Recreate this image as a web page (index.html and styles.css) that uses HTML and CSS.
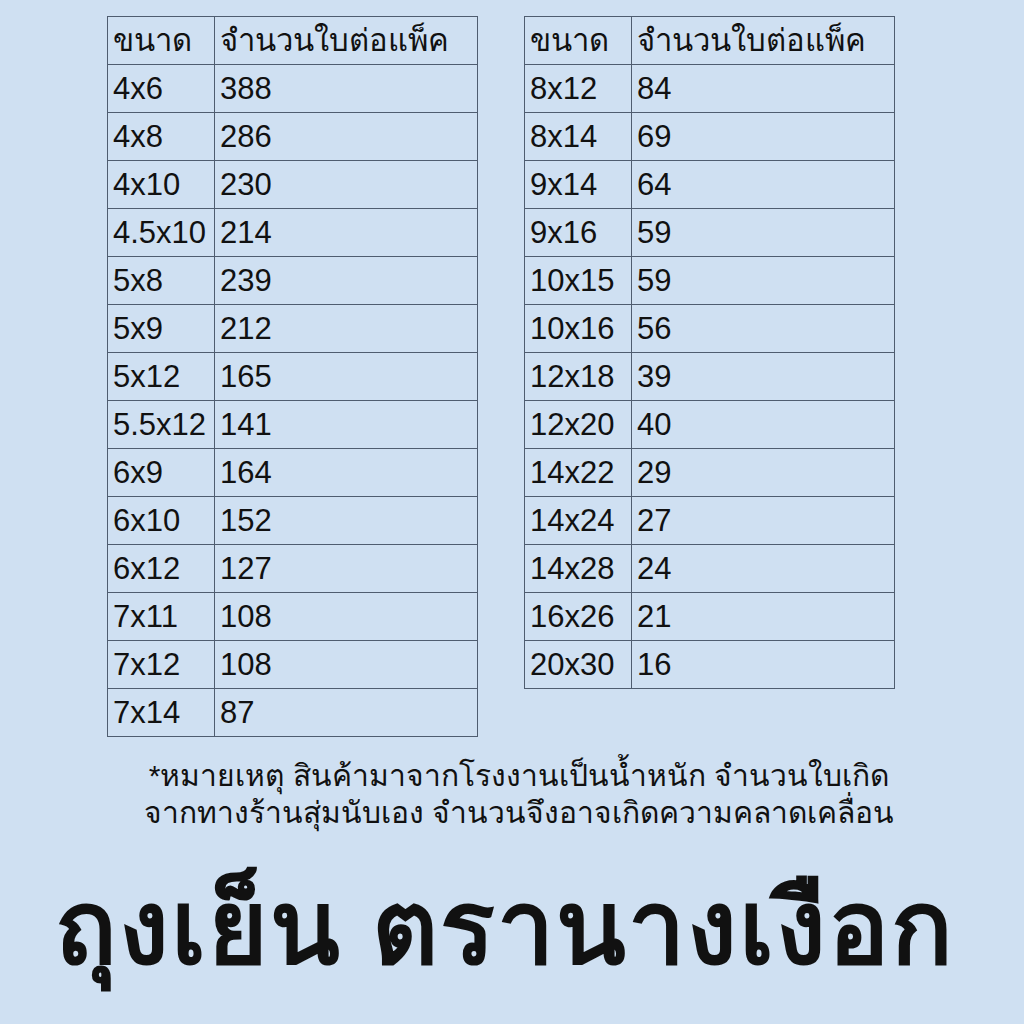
FILE: index.html
```html
<!DOCTYPE html>
<html lang="th">
<head>
<meta charset="utf-8">
<link rel="stylesheet" href="styles.css">
</head>
<body>
<div class="page">
  <div class="tables">
    <table class="grid">
      <tr><td class="c1">ขนาด</td><td class="c2">จำนวนใบต่อแพ็ค</td></tr>
      <tr><td>4x6</td><td>388</td></tr>
      <tr><td>4x8</td><td>286</td></tr>
      <tr><td>4x10</td><td>230</td></tr>
      <tr><td>4.5x10</td><td>214</td></tr>
      <tr><td>5x8</td><td>239</td></tr>
      <tr><td>5x9</td><td>212</td></tr>
      <tr><td>5x12</td><td>165</td></tr>
      <tr><td>5.5x12</td><td>141</td></tr>
      <tr><td>6x9</td><td>164</td></tr>
      <tr><td>6x10</td><td>152</td></tr>
      <tr><td>6x12</td><td>127</td></tr>
      <tr><td>7x11</td><td>108</td></tr>
      <tr><td>7x12</td><td>108</td></tr>
      <tr><td>7x14</td><td>87</td></tr>
    </table>
    <table class="grid">
      <tr><td class="c1">ขนาด</td><td class="c2">จำนวนใบต่อแพ็ค</td></tr>
      <tr><td>8x12</td><td>84</td></tr>
      <tr><td>8x14</td><td>69</td></tr>
      <tr><td>9x14</td><td>64</td></tr>
      <tr><td>9x16</td><td>59</td></tr>
      <tr><td>10x15</td><td>59</td></tr>
      <tr><td>10x16</td><td>56</td></tr>
      <tr><td>12x18</td><td>39</td></tr>
      <tr><td>12x20</td><td>40</td></tr>
      <tr><td>14x22</td><td>29</td></tr>
      <tr><td>14x24</td><td>27</td></tr>
      <tr><td>14x28</td><td>24</td></tr>
      <tr><td>16x26</td><td>21</td></tr>
      <tr><td>20x30</td><td>16</td></tr>
    </table>
  </div>
  <p class="note">*หมายเหตุ สินค้ามาจากโรงงานเป็นน้ำหนัก จำนวนใบเกิด<br>จากทางร้านสุ่มนับเอง จำนวนจึงอาจเกิดความคลาดเคลื่อน</p>
  <h1 class="title">ถุงเย็น ตรานางเงือก</h1>
</div>
</body>
</html>
```

FILE: styles.css
```css
html, body {
  margin: 0;
  padding: 0;
}
body {
  background: #cfe0f2;
  width: 1024px;
  height: 1024px;
  overflow: hidden;
  font-family: "Liberation Sans", Arial, sans-serif;
  color: #111;
}
.page {
  display: flex;
  flex-direction: column;
  align-items: stretch;
}
.tables {
  display: flex;
  align-items: flex-start;
  padding: 16px 0 0 107px;
  gap: 46px;
}
.grid {
  border-collapse: collapse;
  width: 371px;
  table-layout: fixed;
}
.grid td {
  border: 1px solid #4f5d70;
  height: 47px;
  padding: 0 0 0 5px;
  font-size: 31px;
  line-height: 47px;
  white-space: nowrap;
  overflow: visible;
  box-sizing: border-box;
}
.grid tr:first-child td { height: 48px; }
.grid td.c1 { width: 107px; }
.note {
  margin: 20px 0 0 0;
  text-align: center;
  font-size: 30px;
  line-height: 37px;
  padding-left: 14px;
}
.title {
  margin: 42px 0 0 0;
  text-align: center;
  font-size: 102px;
  line-height: 110px;
  font-weight: bold;
  letter-spacing: 2px;
  padding-right: 14px;
}
```
